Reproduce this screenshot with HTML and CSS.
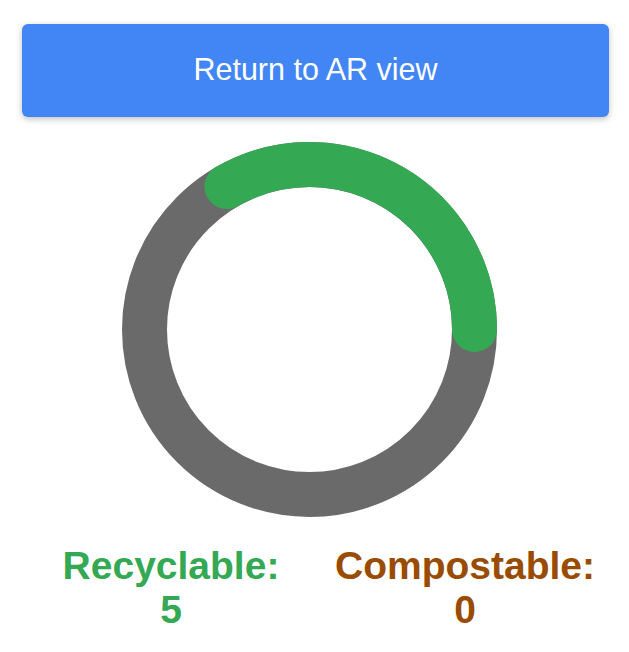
FILE: index.html
```html
<!DOCTYPE html>
<html lang="en">
<head>
    <meta charset="UTF-8">
    <meta name="viewport" content="width=device-width, initial-scale=1.0">
    <title>Waste Summary</title>
    <link rel="stylesheet" href="styles.css">
</head>
<body>

    <!-- Back button -->
    <div class="top-bar">
        <button class="ar-button" type="button">Return to AR view</button>
    </div>

    <!-- Progress ring -->
    <div class="chart">
        <svg class="ring" width="375" height="375" viewBox="0 0 375 375">
            <circle class="ring-track" cx="187.5" cy="187.5" r="165"></circle>
            <path class="ring-progress" d="M 105 44.6 A 165 165 0 0 1 352.5 187.5"></path>
        </svg>
    </div>

    <!-- Counts -->
    <div class="stats">
        <div class="stat recyclable">
            <div>Recyclable:</div>
            <div>5</div>
        </div>
        <div class="stat compostable">
            <div>Compostable:</div>
            <div>0</div>
        </div>
    </div>

</body>
</html>
```

FILE: styles.css
```css
body {
    margin: 0;
    font-family: "Liberation Sans", Arial, sans-serif;
    background-color: #fff;
}

.top-bar {
    padding: 24px 20px 0 22px;
}

.ar-button {
    display: block;
    width: 100%;
    height: 93px;
    padding: 0 0 3px;
    border: none;
    border-radius: 6px;
    background-color: #4285f4;
    color: #fff;
    font-family: "Liberation Sans", Arial, sans-serif;
    font-size: 30.5px;
    box-shadow: 0 2px 6px rgba(0, 0, 0, 0.25);
    cursor: pointer;
}

.chart {
    display: flex;
    justify-content: center;
    padding: 25px 10px 0 0;
}

.ring {
    display: block;
}

.ring-track {
    fill: none;
    stroke: #6a6a6a;
    stroke-width: 45;
}

.ring-progress {
    fill: none;
    stroke: #34a853;
    stroke-width: 45;
    stroke-linecap: round;
}

.stats {
    display: flex;
    padding: 27px 17px 0 24px;
}

.stat {
    flex: 1;
    text-align: center;
    font-size: 39px;
    font-weight: bold;
}

.recyclable {
    color: #34a853;
}

.compostable {
    color: #994c00;
}
```
